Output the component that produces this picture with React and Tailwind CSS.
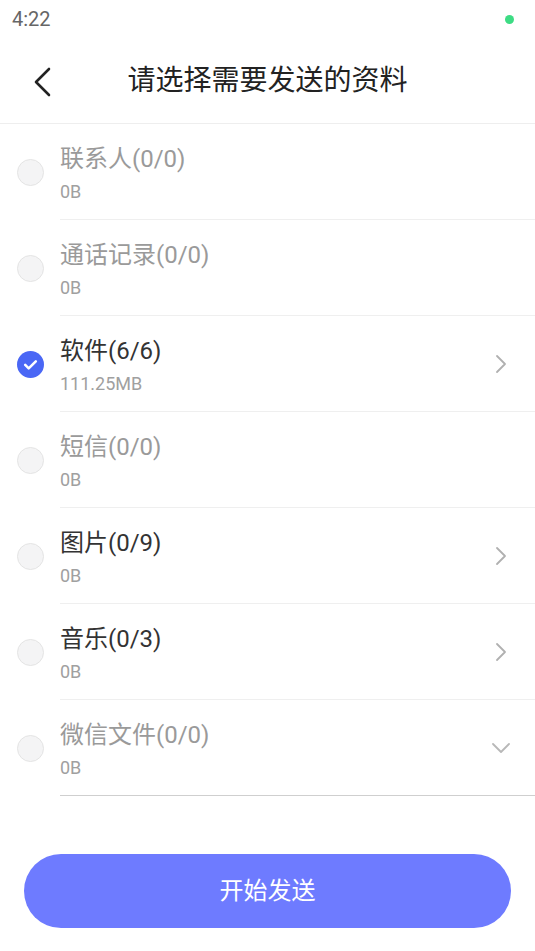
import React from 'react';

const items = [
  { name: '联系人(0/0)', size: '0B', off: true },
  { name: '通话记录(0/0)', size: '0B', off: true },
  { name: '软件(6/6)', size: '111.25MB', checked: true, arrow: 'right' },
  { name: '短信(0/0)', size: '0B', off: true },
  { name: '图片(0/9)', size: '0B', arrow: 'right' },
  { name: '音乐(0/3)', size: '0B', arrow: 'right' },
  { name: '微信文件(0/0)', size: '0B', off: true, arrow: 'down', last: true },
];

const Check = ({ checked }) => {
  if (checked) {
    return (
      <div className="w-[27px] h-[27px] rounded-full bg-[#4a67f5] flex items-center justify-center">
        <svg width="17" height="17" viewBox="0 0 16 16" fill="none">
          <path d="M3 8.4l3.3 3.2L13 5" stroke="#fff" strokeWidth="2.4" strokeLinecap="round" strokeLinejoin="round" />
        </svg>
      </div>
    );
  }
  return <div className="w-[27px] h-[27px] rounded-full bg-[#f4f4f5] border border-[#e4e4e4]" />;
};

const Arrow = ({ dir }) => {
  if (dir === 'right') {
    return (
      <svg width="12" height="20" viewBox="0 0 12 20" fill="none">
        <path d="M2 2l8 8-8 8" stroke="#b0b0b0" strokeWidth="1.8" strokeLinecap="round" strokeLinejoin="round" />
      </svg>
    );
  }
  return (
    <svg width="20" height="12" viewBox="0 0 20 12" fill="none">
      <path d="M2 2l8 8 8-8" stroke="#b8b8b8" strokeWidth="1.8" strokeLinecap="round" strokeLinejoin="round" />
    </svg>
  );
};

const Row = ({ item }) => (
  <div className="flex h-[96px]">
    <div className="w-[60px] flex items-center pl-[17px]">
      <Check checked={item.checked} />
    </div>
    <div className={`flex-1 flex items-center border-b ${item.last ? 'border-[#cfcfcf]' : 'border-[#efefef]'}`}>
      <div className="flex-1 pt-[4px]">
        <div className={`text-[24px] leading-[30px] ${item.off ? 'text-[#9a9a9a]' : 'text-[#333333]'}`}>{item.name}</div>
        <div className="text-[18px] leading-[22px] mt-[7px] text-[#a0a0a0]">{item.size}</div>
      </div>
      <div className="w-[20px] flex justify-center mr-[24px]">
        {item.arrow && <Arrow dir={item.arrow} />}
      </div>
    </div>
  </div>
);

const App = () => {
  return (
    <div className="w-[535px] h-[951px] bg-white flex flex-col font-[Roboto,'Noto_Sans_CJK_SC',sans-serif]">
      <div className="h-[38px] flex items-center justify-between pl-[12px] pr-[21px]">
        <span className="text-[20px] text-[#666666]">4:22</span>
        <span className="w-[9px] h-[9px] rounded-full bg-[#3ddc84]" />
      </div>

      <div className="h-[86px] grid grid-cols-[84px_1fr_84px] items-center border-b border-[#eeeeee]">
        <div className="pl-[33px] pt-[2px]">
          <svg width="18" height="30" viewBox="0 0 18 30" fill="none">
            <path d="M16 2L3 15l13 13" stroke="#222" strokeWidth="2.6" strokeLinecap="round" strokeLinejoin="round" />
          </svg>
        </div>
        <div className="text-center text-[28px] text-[#222222] pt-[1px]">请选择需要发送的资料</div>
        <div />
      </div>

      <div className="flex flex-col">
        {items.map((it) => (
          <Row key={it.name} item={it} />
        ))}
      </div>

      <div className="px-[24px] mt-[58px]">
        <button className="w-full h-[74px] rounded-full bg-[#6e7bff] text-white text-[24px]">开始发送</button>
      </div>
    </div>
  );
};

export default App;
